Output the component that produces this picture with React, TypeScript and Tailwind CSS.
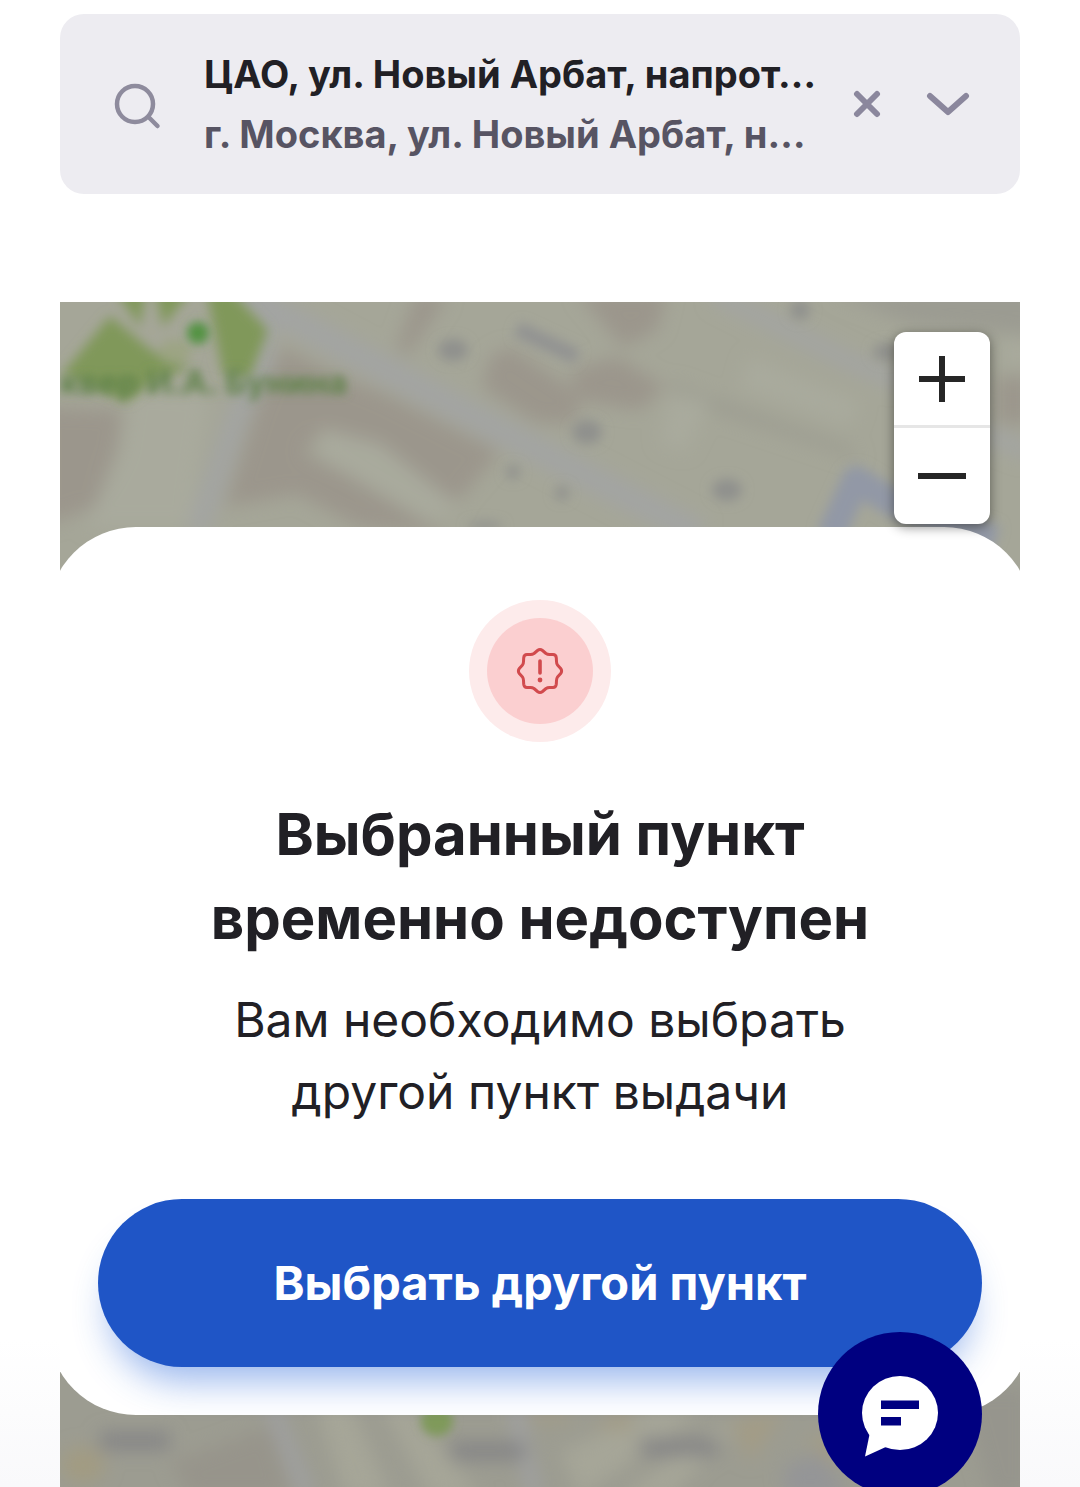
import type { ReactNode } from "react";

function SearchIcon() {
  return (
    <svg className="h-[54px] w-12 shrink-0" viewBox="0 -6 48 54" fill="none" stroke="#8e8b9d" strokeLinecap="round" aria-hidden="true">
      <circle cx="21" cy="21" r="18" strokeWidth="4.5" />
      <path d="M35 34.5 43.500 43" strokeWidth="4.5" />
    </svg>
  );
}

function AddressBar() {
  return (
    <div className="flex h-[180px] items-center rounded-3xl bg-[#edecf1] pr-[50px] pl-[54px]">
      <SearchIcon />
      <button type="button" className="ml-[42px] min-w-0 flex-1 text-left text-[38px] leading-[60px] font-bold whitespace-nowrap">
        <span className="block text-[#212025]">ЦАО, ул. Новый Арбат, напрот…</span>
        <span className="block text-[#575463]">г. Москва, ул. Новый Арбат, н…</span>
      </button>
      <button type="button" aria-label="Очистить" className="shrink-0">
        <svg className="size-7" viewBox="0 0 28 28" fill="none" stroke="#8b879d" strokeWidth="6" strokeLinecap="round">
          <path d="M4 4 24 24M24 4 4 24" />
        </svg>
      </button>
      <button type="button" aria-label="Открыть список" className="ml-[45px] shrink-0">
        <svg className="h-7 w-11" viewBox="0 0 44 28" fill="none" stroke="#8b879d" strokeWidth="6" strokeLinecap="round" strokeLinejoin="round">
          <path d="M4 6 22 22 40 6" />
        </svg>
      </button>
    </div>
  );
}

function MapCanvas() {
  return (
    <svg className="absolute inset-0 size-full" viewBox="0 0 960 1185" preserveAspectRatio="xMidYMin slice" aria-hidden="true">
      <defs>
        <filter id="soft" x="-5%" y="-10%" width="110%" height="120%">
          <feGaussianBlur stdDeviation="6" />
        </filter>
        <filter id="softer" x="-5%" y="-20%" width="110%" height="140%">
          <feGaussianBlur stdDeviation="9" />
        </filter>
        <filter id="label" x="-10%" y="-60%" width="120%" height="220%">
          <feGaussianBlur stdDeviation="5" />
        </filter>
        <filter id="dot" x="-150%" y="-150%" width="400%" height="400%">
          <feGaussianBlur stdDeviation="5" />
        </filter>
      </defs>
      <rect width="960" height="1185" fill="#a5a698" />
      <g filter="url(#softer)">
        <g fill="#9b968c">
          <path d="M-20 105 63 108 57 148 35 205-20 225Z" />
          <path d="M222 45 275 72 325 92 440 150 397 200 325 160 265 128 243 150 290 175 390 235 300 225 237 192 165 205 195 110Z" />
          <path d="M337 45 357-10 387-5 347 55ZM430 55 450 45 520 92 515 122 475 120 422 85Z" />
          <path d="M517-10 607-10 597 28 563 45ZM512 68 557 55 605 85 580 108 517 98Z" />
          <path d="M937 75H970V122H937Z" />
        </g>
        <path d="M770-10H980V35L850 22Z" fill="#9b9b92" />
        <path d="M610 80 790 145 800 158 610 95Z" fill="#9c9c91" />
        <g fill="#a9aa9d">
          <path d="M260 126 320 142 400 205 370 220 260 155ZM70 85 150 90 130 225 25 225 60 150ZM690 55 800 100 790 125 680 85ZM610 90 650 100 625 150 600 140ZM945 35H970V65H945Z" />
        </g>
        <g fill="none" stroke="#a3a4a3">
          <path d="M170-15 490 155 640 232" strokeWidth="26" />
          <path d="M207 10 200 65 177 115 137 230" strokeWidth="20" />
          <path d="M655-8 793 61 840 80M925 132 970 150" strokeWidth="16" />
        </g>
      </g>
      <g filter="url(#soft)">
        <g fill="#80985a">
          <path d="M50 14 92 49 130 66 95 78 67 100 2 72ZM54-14H86L80 25ZM95-14H133L103 25ZM146-14H168L208 28 190 75 163 72Z" />
        </g>
        <ellipse cx="115" cy="50" rx="16" ry="12" fill="#9ca483" />
        <g fill="#8f908d">
          <ellipse cx="393" cy="48" rx="15" ry="11" />
          <ellipse cx="527" cy="130" rx="15" ry="12" />
          <ellipse cx="667" cy="188" rx="15" ry="11" />
          <circle cx="502" cy="191" r="7" />
          <circle cx="453" cy="170" r="7" />
          <circle cx="740" cy="8" r="10" />
          <ellipse cx="825" cy="50" rx="12" ry="9" />
          <ellipse cx="425" cy="224" rx="18" ry="4" />
        </g>
        <path d="M457 27 517 55" stroke="#919292" strokeWidth="15" fill="none" />
        <path d="M770 235 796 178 832 200 935 238" stroke="#9298a6" strokeWidth="28" fill="none" strokeLinejoin="round" />
      </g>
      <circle cx="138" cy="31" r="11" fill="#539342" filter="url(#dot)" />
      <text x="0" y="92" fontSize="33" fontWeight="700" fill="#5f8248" filter="url(#label)" className="font-['Inter',sans-serif]">
        квер И.А. Бунина
      </text>
      <rect y="1050" width="960" height="135" fill="#9c9c91" />
      <g filter="url(#softer)">
        <ellipse cx="23" cy="1163" rx="22" ry="18" fill="#a29b82" />
        <path d="M255 1100 285 1195H330L290 1100ZM320 1100 370 1195H420L345 1100ZM500 1150 600 1105 640 1110 520 1195ZM560 1195 650 1130 680 1120 610 1195Z" fill="#a6a698" />
        <path d="M530 1125 570 1105V1130ZM670 1120 725 1108 690 1160ZM745 1140 790 1125 775 1165ZM470 1120H510V1110H470Z" fill="#a39c86" />
        <path d="M723 1165 760 1150 790 1195H725Z" fill="#949597" />
        <path d="M900 1085H970V1195H930Z" fill="#96958d" />
        <path d="M110 1160 210 1125 230 1195H130Z" fill="#97948b" />
        <path d="M212 1105 248 1195M455 1105 475 1195" stroke="#a0a1a5" strokeWidth="11" fill="none" />
        <path d="M40 1130H110V1148H40ZM390 1140H465V1158H390ZM580 1136H658V1154H580Z" fill="#858586" />
      </g>
      <ellipse cx="377" cy="1119" rx="16" ry="15" fill="#7f9a5a" filter="url(#dot)" />
    </svg>
  );
}

function ZoomButton({ label, className, children }: { label: string; className: string; children: ReactNode }) {
  return (
    <button type="button" aria-label={label} className={className}>
      <svg className="size-12" viewBox="0 0 48 48" stroke="#262626" strokeWidth="6" fill="none">
        {children}
      </svg>
    </button>
  );
}

function WarningBadge() {
  return (
    <div className="flex size-[142px] items-center justify-center rounded-full bg-[#fdebeb]">
      <div className="flex size-[106px] items-center justify-center rounded-full bg-[#fbcfd0]">
        <svg className="size-12" viewBox="0 0 48 48" fill="none" stroke="#d14a4d" strokeWidth="3" strokeLinecap="round" strokeLinejoin="round" aria-hidden="true">
          <path d="M21.5 3.5Q24 1.500 26.500 3.500L30 6.500Q31.500 7.500 33.500 7.500H37Q40 7.500 40.300 10.800L40.500 14.500Q40.500 16.500 41.500 18L44.700 21.500Q46.500 24 44.700 26.500L41.500 30Q40.500 31.500 40.500 33.500L40.300 37.200Q40 40.500 37 40.500H33.500Q31.500 40.500 30 41.500L26.500 44.500Q24 46.500 21.500 44.500L18 41.500Q16.500 40.500 14.500 40.500H11Q8 40.500 7.700 37.200L7.500 33.500Q7.500 31.500 6.500 30L3.300 26.500Q1.500 24 3.300 21.500L6.500 18Q7.500 16.500 7.500 14.500L7.700 10.800Q8 7.500 11 7.500H14.500Q16.500 7.500 18 6.500Z" />
          <path d="M24 14V26" strokeWidth="3.600" />
          <circle cx="24" cy="33" r="2.400" fill="#d14a4d" stroke="none" />
        </svg>
      </div>
    </div>
  );
}

function UnavailableDialog() {
  return (
    <div role="dialog" aria-labelledby="dialog-title" className="relative -mx-3 flex flex-col items-center rounded-[88px] bg-white px-[50px] pt-[73px] pb-12 text-center text-[#212025]">
      <WarningBadge />
      <h1 id="dialog-title" className="mt-[50px] text-[58px] leading-[84px] font-bold">
        Выбранный пункт
        <br />
        временно недоступен
      </h1>
      <p className="mt-6 text-[48px] leading-[72px]">
        Вам необходимо выбрать
        <br />
        другой пункт выдачи
      </p>
      <button type="button" className="mt-[71px] h-[168px] w-full rounded-full bg-[#1f55c6] text-[47px] font-bold text-white shadow-[0_26px_36px_-12px_rgba(31,95,216,0.45)]">
        Выбрать другой пункт
      </button>
    </div>
  );
}

function ChatButton() {
  return (
    <button type="button" aria-label="Открыть чат" className="fixed right-[98px] -bottom-[9px] z-20 size-[164px] rounded-full bg-[#000080]">
      <svg className="size-full" viewBox="0 0 164 164" aria-hidden="true">
        <ellipse cx="82" cy="81" rx="38" ry="37" fill="#fff" />
        <path d="M52 100 47 124.500 70 114Z" fill="#fff" />
        <path d="M63 68.500H101V77H63ZM63 85H83V93.500H63Z" fill="#000080" />
      </svg>
    </button>
  );
}

export default function App() {
  return (
    <main className="flex min-h-screen flex-col bg-linear-to-b from-white from-90% to-[#f9f9fb] px-[60px] pt-3.5 font-['Inter',sans-serif]">
      <AddressBar />
      <section aria-label="Карта" className="relative mt-[108px] flex-1 overflow-hidden pt-[225px] pb-[72px]">
        <MapCanvas />
        <UnavailableDialog />
        <div className="absolute top-[30px] right-[30px] z-10 flex w-24 flex-col rounded-xl bg-white shadow-[0_3px_12px_rgba(0,0,0,0.45)]">
          <ZoomButton label="Приблизить" className="flex h-24 items-center justify-center border-b-[3px] border-[#e6e6e6]">
            <path d="M24 1V47M1 24H47" />
          </ZoomButton>
          <ZoomButton label="Отдалить" className="flex h-24 items-center justify-center">
            <path d="M0 24H48" />
          </ZoomButton>
        </div>
      </section>
      <ChatButton />
    </main>
  );
}
